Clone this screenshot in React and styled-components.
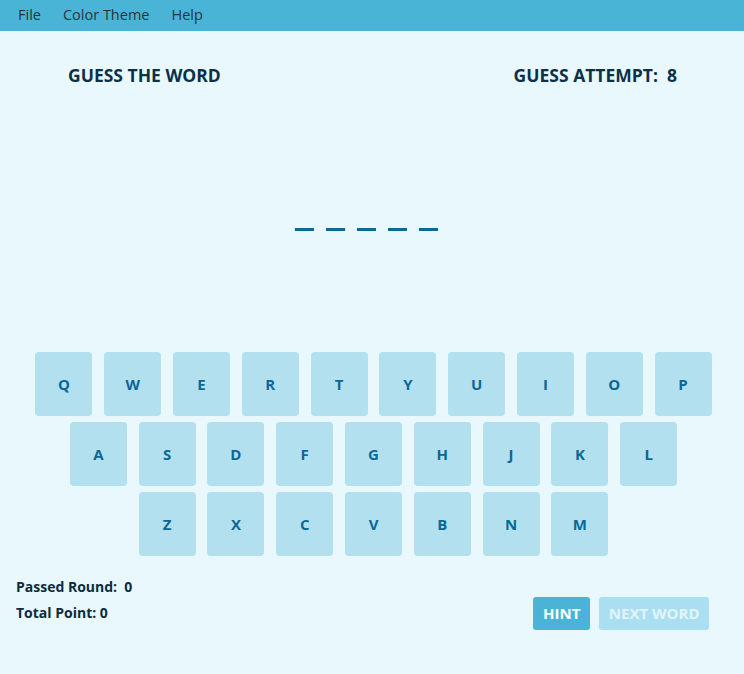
import React from "react"
import styled, { createGlobalStyle } from "styled-components"

const GlobalStyle = createGlobalStyle`
  html, body {
    margin: 0;
    padding: 0;
    background: #e8f8fc;
  }
  body {
    font-family: "Open Sans", "Noto Sans", sans-serif;
  }
`

const Window = styled.div`
  width: 744px;
  height: 674px;
  display: flex;
  flex-direction: column;
  background: #e8f8fc;
  overflow: hidden;
`

const MenuBar = styled.nav`
  height: 31px;
  background: #4ab4d6;
  display: flex;
  align-items: center;
  padding: 0 0 2px 18px;
  box-sizing: border-box;
  gap: 22px;
  font-size: 14.5px;
  color: #25343c;
`

const MenuItem = styled.span`
  cursor: default;
`

const Main = styled.main`
  flex: 1;
  display: flex;
  flex-direction: column;
`

const Header = styled.header`
  margin-top: 32px;
  height: 24px;
  display: flex;
  justify-content: space-between;
  align-items: center;
  padding: 0 67px 0 68px;
  font-size: 17.5px;
  font-weight: 700;
  color: #0c3049;
`

const WordArea = styled.div`
  height: 265px;
  padding: 141px 12px 0 0;
  box-sizing: border-box;
  display: flex;
  justify-content: center;
  gap: 12px;
`

const Dash = styled.span`
  width: 19px;
  height: 3px;
  background: #0a6a93;
`

const Keyboard = styled.div`
  display: flex;
  flex-direction: column;
  align-items: center;
  gap: 6px;
  padding-left: 3px;
`

const KeyRow = styled.div`
  display: flex;
  gap: 11.8px;
`

const Key = styled.button`
  width: 57px;
  height: 64px;
  border: none;
  border-radius: 4px;
  background: #b2e0ee;
  color: #0a6898;
  font-family: inherit;
  font-size: 15px;
  font-weight: 700;
  padding: 0;
  cursor: pointer;
`

const Footer = styled.footer`
  margin-top: 18px;
  display: flex;
  justify-content: space-between;
  align-items: flex-start;
  padding: 0 35px 0 16px;
`

const Stats = styled.div`
  display: flex;
  flex-direction: column;
  font-size: 14px;
  font-weight: 700;
  color: #0d2b40;
  line-height: 26px;
`

const Buttons = styled.div`
  display: flex;
  gap: 9px;
  margin-top: 23px;
`

const ActionButton = styled.button`
  height: 33px;
  padding: 0 ${(p) => (p.$wide ? "9.5px" : "10px")};
  border: none;
  border-radius: 3px;
  background: ${(p) => (p.disabled ? "#a9dff0" : "#4ab4d6")};
  color: ${(p) => (p.disabled ? "#e2f5fb" : "#ffffff")};
  font-family: inherit;
  font-size: 15px;
  line-height: 31px;
  font-weight: 700;
  cursor: ${(p) => (p.disabled ? "default" : "pointer")};
`

const rows = ["QWERTYUIOP", "ASDFGHJKL", "ZXCVBNM"]

export default function App() {
  return (
    <>
      <GlobalStyle />
      <Window>
        <MenuBar>
          <MenuItem>File</MenuItem>
          <MenuItem>Color Theme</MenuItem>
          <MenuItem>Help</MenuItem>
        </MenuBar>
        <Main>
          <Header>
            <span>GUESS THE WORD</span>
            <span>GUESS ATTEMPT:&nbsp; 8</span>
          </Header>
          <WordArea>
            {[0, 1, 2, 3, 4].map((i) => (
              <Dash key={i} />
            ))}
          </WordArea>
          <Keyboard>
            {rows.map((row) => (
              <KeyRow key={row}>
                {row.split("").map((ch) => (
                  <Key key={ch}>{ch}</Key>
                ))}
              </KeyRow>
            ))}
          </Keyboard>
          <Footer>
            <Stats>
              <span>Passed Round:&nbsp; 0</span>
              <span>Total Point: 0</span>
            </Stats>
            <Buttons>
              <ActionButton>HINT</ActionButton>
              <ActionButton $wide disabled>
                NEXT WORD
              </ActionButton>
            </Buttons>
          </Footer>
        </Main>
      </Window>
    </>
  )
}
